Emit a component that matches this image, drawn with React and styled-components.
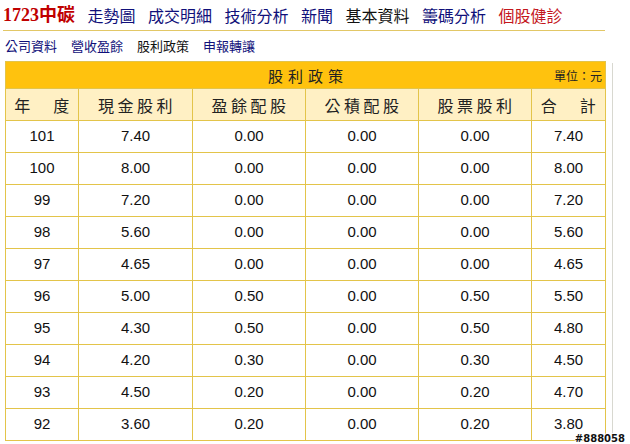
import React from "react";
import styled, { createGlobalStyle } from "styled-components";

const Global = createGlobalStyle`
  html, body { margin: 0; padding: 0; background: #fff; }
  body { font-family: "Liberation Sans", "Noto Sans CJK TC", sans-serif; overflow: hidden; }
`;

const Page = styled.div`
  width: 630px;
  height: 444px;
  position: relative;
  overflow: hidden;
`;

const Nav = styled.div`
  display: flex;
  align-items: center;
  height: 30px;
  padding-left: 3px;
  gap: 12.5px;
  font-family: "Noto Sans CJK TC", sans-serif;
  font-size: 16px;
  line-height: 1;
`;

const NavItem = styled.span`
  color: ${p => p.$tone === "red" ? "#c4161c" : p.$tone === "black" ? "#111" : "#10107a"};
  white-space: nowrap;
`;

const Brand = styled.span`
  color: #c00000;
  font-weight: bold;
  font-family: "Liberation Serif", "Noto Sans CJK TC", serif;
  font-size: 18px;
  white-space: nowrap;
`;

const Divider = styled.div`
  margin-left: 3px;
  width: 602px;
  height: 1px;
  background: #e2c766;
`;

const SubNav = styled.div`
  display: flex;
  align-items: center;
  height: 29px;
  padding-left: 5px;
  gap: 14px;
  font-family: "Noto Sans CJK TC", sans-serif;
  font-size: 13px;
`;

const SubItem = styled.span`
  color: ${p => p.$active ? "#111" : "#10107a"};
`;

const Main = styled.div`
  display: flex;
  align-items: flex-start;
  margin-top: 1px;
`;

const Table = styled.table`
  margin-left: 5px;
  width: 600px;
  border-collapse: collapse;
  table-layout: fixed;
  border: 1px solid #e3c44a;
`;

const TitleCell = styled.td`
  background: #ffc20e;
  height: 26px;
  padding: 0 0 0 5px;
  border: 1px solid #e3c44a;
  position: relative;
  text-align: center;
  font-family: "Noto Sans CJK TC", sans-serif;
  font-size: 15px;
  letter-spacing: 5px;
  color: #222;
`;

const Unit = styled.span`
  position: absolute;
  right: 3px;
  top: 50%;
  transform: translateY(-50%);
  font-size: 12px;
  letter-spacing: 0;
`;

const Th = styled.th`
  background: #fff0c4;
  height: 31px;
  padding: 0 0 0 3px;
  border: 1px solid #e3c44a;
  font-weight: normal;
  font-family: "Noto Sans CJK TC", sans-serif;
  font-size: 16px;
  letter-spacing: 3.5px;
  color: #222;
  text-align: center;
`;

const Td = styled.td`
  height: 29px;
  padding: 0 0 2px;
  border: 1px solid #e3c44a;
  text-align: center;
  font-family: "Liberation Sans", sans-serif;
  font-size: 15px;
  color: #111;
  background: #fff;
`;

const SideRule = styled.div`
  margin-left: 6px;
  margin-top: 2px;
  width: 1px;
  height: 380px;
  background: #d8d8d0;
`;

const Watermark = styled.span`
  position: absolute;
  right: 5px;
  bottom: 0px;
  font-family: "DejaVu Sans", sans-serif;
  font-weight: bold;
  font-size: 10px;
  color: #111;
  text-shadow: 1px 0 #fff, -1px 0 #fff, 0 1px #fff, 0 -1px #fff;
`;

const navItems = [
  ["走勢圖", "blue"],
  ["成交明細", "blue"],
  ["技術分析", "blue"],
  ["新聞", "blue"],
  ["基本資料", "black"],
  ["籌碼分析", "blue"],
  ["個股健診", "red"],
];

const subItems = [
  ["公司資料", false],
  ["營收盈餘", false],
  ["股利政策", true],
  ["申報轉讓", false],
];

const headers = ["年　度", "現金股利", "盈餘配股", "公積配股", "股票股利", "合　計"];
const widths = [73, 114, 113, 113, 113, 74];

const rows = [
  ["101", "7.40", "0.00", "0.00", "0.00", "7.40"],
  ["100", "8.00", "0.00", "0.00", "0.00", "8.00"],
  ["99", "7.20", "0.00", "0.00", "0.00", "7.20"],
  ["98", "5.60", "0.00", "0.00", "0.00", "5.60"],
  ["97", "4.65", "0.00", "0.00", "0.00", "4.65"],
  ["96", "5.00", "0.50", "0.00", "0.50", "5.50"],
  ["95", "4.30", "0.50", "0.00", "0.50", "4.80"],
  ["94", "4.20", "0.30", "0.00", "0.30", "4.50"],
  ["93", "4.50", "0.20", "0.00", "0.20", "4.70"],
  ["92", "3.60", "0.20", "0.00", "0.20", "3.80"],
];

export default function App() {
  return (
    <Page>
      <Global />
      <Nav>
        <Brand>1723中碳</Brand>
        {navItems.map(([t, tone]) => (
          <NavItem key={t} $tone={tone}>{t}</NavItem>
        ))}
      </Nav>
      <Divider />
      <SubNav>
        {subItems.map(([t, a]) => (
          <SubItem key={t} $active={a}>{t}</SubItem>
        ))}
      </SubNav>
      <Main>
        <Table>
          <colgroup>
            {widths.map((w, i) => <col key={i} style={{ width: w }} />)}
          </colgroup>
          <tbody>
            <tr>
              <TitleCell colSpan={6}>
                股利政策
                <Unit>單位：元</Unit>
              </TitleCell>
            </tr>
            <tr>
              {headers.map(h => <Th key={h}>{h}</Th>)}
            </tr>
            {rows.map(r => (
              <tr key={r[0]}>
                {r.map((c, i) => <Td key={i}>{c}</Td>)}
              </tr>
            ))}
          </tbody>
        </Table>
        <SideRule />
      </Main>
      <Watermark>#888058</Watermark>
    </Page>
  );
}
